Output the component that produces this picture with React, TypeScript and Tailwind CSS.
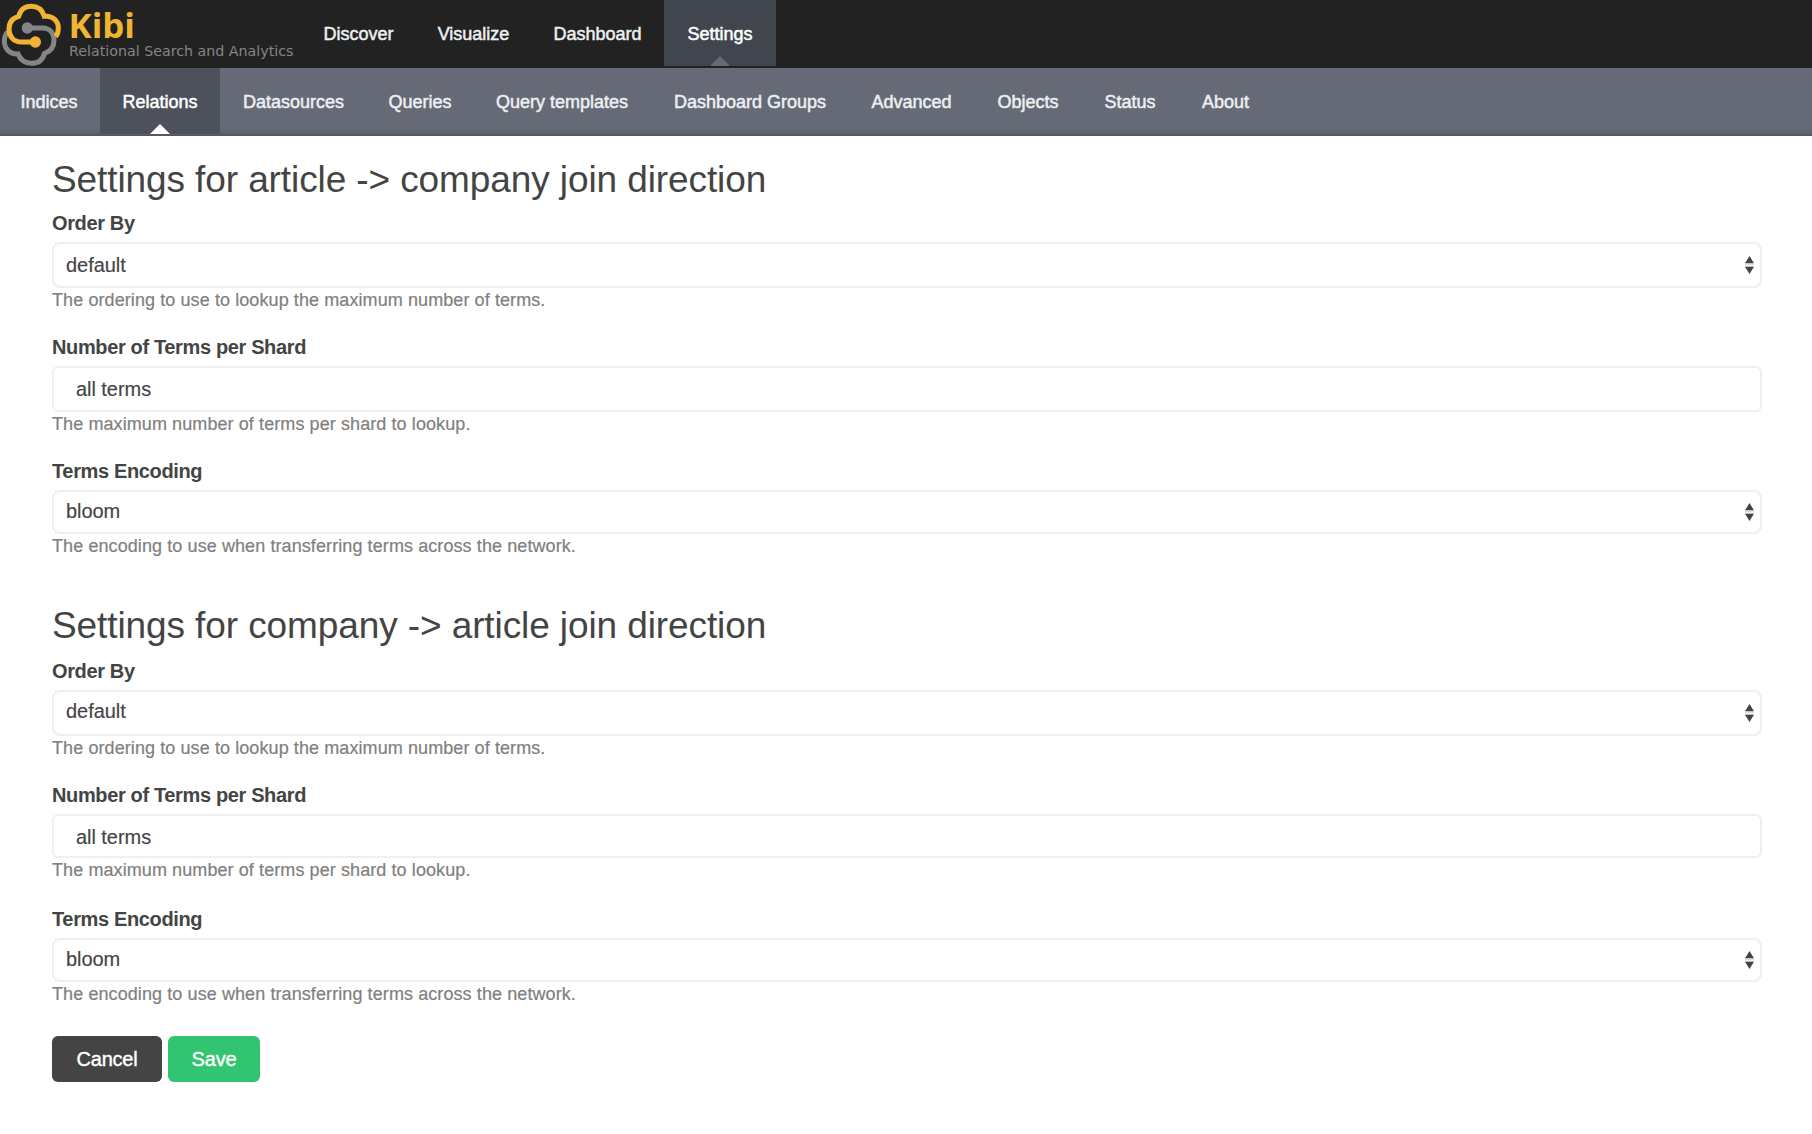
import React from "react";

const topTabs = [
  { label: "Discover", width: "w-[115px]" },
  { label: "Visualize", width: "w-[115px]" },
  { label: "Dashboard", width: "w-[133px]" },
  { label: "Settings", width: "w-[112px]", active: true },
];

const subTabs = [
  { label: "Indices", width: "w-[100px] pr-[2px]" },
  { label: "Relations", width: "w-[120px]", active: true },
  { label: "Datasources", width: "w-[147px]" },
  { label: "Queries", width: "w-[106px]" },
  { label: "Query templates", width: "w-[178px]" },
  { label: "Dashboard Groups", width: "w-[198px]" },
  { label: "Advanced", width: "w-[126px] pr-px" },
  { label: "Objects", width: "w-[107px] pr-px" },
  { label: "Status", width: "w-[97px] pr-px" },
  { label: "About", width: "w-[94px] pr-px" },
];

function Logo() {
  return (
    <svg width="301" height="68" viewBox="0 0 301 68" className="block shrink-0">
      <g transform="scale(0.33333)" fill="none" strokeWidth="15">
        <path
          d="M82 84H127C151 84 162 101 162 121C162 143 150 155 133 161C128 181 113 190 95 190C75 190 61 179 54 162C30 164 13 146 13 124C13 112 16 103 23 96"
          stroke="#858585"
        />
        <circle cx="82" cy="84" r="17" fill="#858585" />
        <path
          d="M106 126H64C41 126 27 110 27 87C27 68 38 54 56 49C61 30 75 19 94 19C113 19 127 30 133 49C158 46 175 63 175 84C175 95 173 103 167 110"
          stroke="#f0b432"
        />
        <circle cx="106" cy="126" r="17" fill="#f0b432" />
      </g>
      <text x="68.5" y="38" textLength="66.5" lengthAdjust="spacingAndGlyphs" fill="#f0b432" className="font-['Open_Sans',sans-serif] text-[34px] font-bold">
        Kibi
      </text>
      <text x="69" y="56" textLength="224.5" lengthAdjust="spacingAndGlyphs" fill="#858585" className="font-['DejaVu_Sans',sans-serif] text-[14.5px]">
        Relational Search and Analytics
      </text>
    </svg>
  );
}

function Pointer({ className }: { className: string }) {
  return (
    <svg width="20" height="10" viewBox="0 0 20 10" className={`absolute bottom-0 left-1/2 -translate-x-1/2 ${className}`}>
      <path d="M0 10L10 0L20 10Z" fill="currentColor" />
    </svg>
  );
}

function Arrows() {
  return (
    <svg width="9" height="18" viewBox="0 0 9 18" className="mr-[6px] shrink-0">
      <path d="M0 7.3L4.5 0L9 7.3ZM0 10.7H9L4.5 18Z" fill="#444" />
      <path d="M0 7.5H9V8.5H0ZM0 9.8H9V10.7H0Z" fill="#bbb" />
    </svg>
  );
}

type FieldProps = {
  label: string;
  value: string;
  help: string;
  select?: boolean;
  box: string;
  className?: string;
};

function Field({ label, value, help, select, box, className = "" }: FieldProps) {
  return (
    <div className={className}>
      <label className="block h-6 text-[20px] leading-6 font-bold tracking-[-0.36px]">{label}</label>
      <div
        className={`mt-[7px] flex items-center justify-between border-2 border-[#ecf0f1] bg-white ${
          select ? "rounded-lg pl-3" : "rounded-md pl-[22px]"
        } ${box}`}
      >
        <span className="self-start text-[20px] leading-6 tracking-[-0.05px] [-webkit-text-stroke:0.15px]">{value}</span>
        {select && <Arrows />}
      </div>
      <p className="h-6 text-[18px] leading-6 tracking-[0.09px] text-[#808080] [-webkit-text-stroke:0.2px]">{help}</p>
    </div>
  );
}

const orderHelp = "The ordering to use to lookup the maximum number of terms.";
const termsHelp = "The maximum number of terms per shard to lookup.";
const encodingHelp = "The encoding to use when transferring terms across the network.";

export default function App() {
  return (
    <div className="min-h-[1134px] w-full bg-white font-['Liberation_Sans',Arial,sans-serif] text-[#444]">
      <header className="flex h-[68px] bg-[#222]">
        <Logo />
        <nav className="flex">
          {topTabs.map((t) => (
            <a
              key={t.label}
              className={`relative h-[66px] pt-[22px] text-center text-[18px] leading-6 [-webkit-text-stroke:0.5px] ${t.width} ${
                t.active ? "bg-[#41454e] text-white" : "text-[#ecf0f1]"
              }`}
            >
              {t.label}
              {t.active && <Pointer className="text-[#656a76]" />}
            </a>
          ))}
        </nav>
      </header>
      <nav className="flex h-[68px] bg-[linear-gradient(to_bottom,#656a76_60px,#5b5f6a_66px,#50535d_68px)]">
        {subTabs.map((t) => (
          <a
            key={t.label}
            className={`relative h-[66px] pt-[22px] text-center text-[18px] leading-6 whitespace-nowrap [-webkit-text-stroke:0.5px] ${t.width} ${
              t.active ? "bg-[#4d515b] text-white" : "text-[#ecf0f1]"
            }`}
          >
            {t.label}
            {t.active && <Pointer className="text-white" />}
          </a>
        ))}
      </nav>
      <main className="pt-6 pr-[50px] pl-[52px]">
        <h1 className="h-10 text-[37px] leading-10 tracking-[-0.1px]">Settings for article -&gt; company join direction</h1>
        <Field className="mt-[11px]" label="Order By" value="default" help={orderHelp} select box="h-[46px] pt-[9px] pb-[9px]" />
        <Field className="mt-[23px]" label="Number of Terms per Shard" value="all terms" help={termsHelp} box="h-[46px] pt-[9px]" />
        <Field className="mt-[23px]" label="Terms Encoding" value="bloom" help={encodingHelp} select box="h-11 pt-[7px] pb-[7px]" />

        <h1 className="mt-12 h-10 text-[37px] leading-10 tracking-[-0.1px]">Settings for company -&gt; article join direction</h1>
        <Field className="mt-[13px]" label="Order By" value="default" help={orderHelp} select box="h-[46px] pt-[7px] pb-[7px]" />
        <Field className="mt-[23px]" label="Number of Terms per Shard" value="all terms" help={termsHelp} box="h-11 pt-[9px]" />
        <Field className="mt-[25px]" label="Terms Encoding" value="bloom" help={encodingHelp} select box="h-11 pt-[7px] pb-[7px]" />

        <div className="mt-[30px] flex gap-[6px] text-[20px] leading-6 tracking-[-0.2px] text-white [-webkit-text-stroke:0.4px]">
          <button className="h-[46px] w-[110px] rounded-md bg-[#444]">Cancel</button>
          <button className="h-[46px] w-[92px] rounded-md bg-[#31c471]">Save</button>
        </div>
      </main>
    </div>
  );
}
